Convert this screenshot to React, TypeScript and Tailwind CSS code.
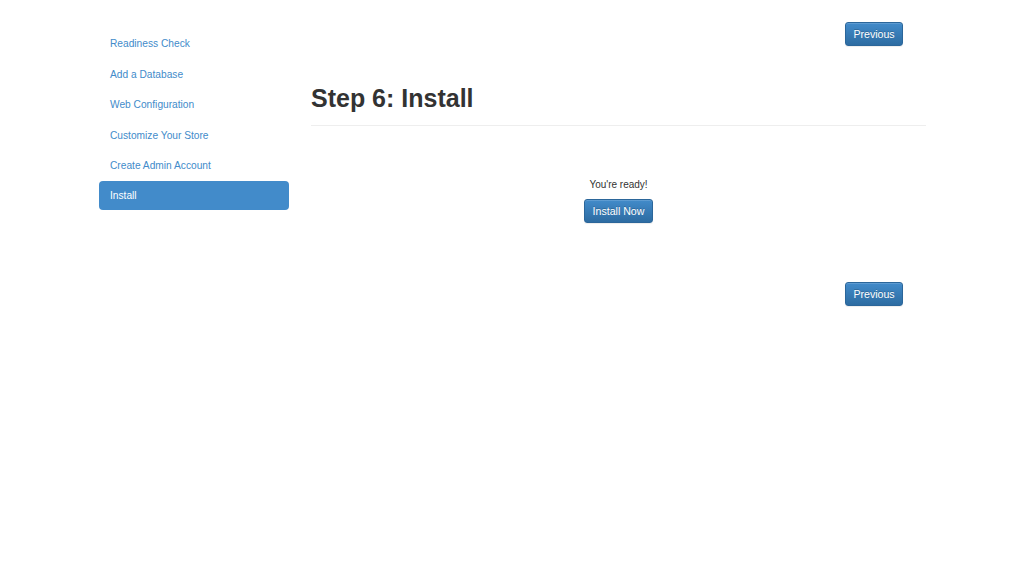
const steps = [
  "Readiness Check",
  "Add a Database",
  "Web Configuration",
  "Customize Your Store",
  "Create Admin Account",
  "Install",
]

function PrimaryButton({ children, width }: { children: React.ReactNode; width: string }) {
  return (
    <button
      className={`${width} h-[24px] rounded-[3px] border border-[#2b669a] bg-linear-to-b from-[#428bca] to-[#2d6ca2] text-white text-[10.6px] leading-none [text-shadow:0_-1px_0_rgba(0,0,0,0.2)] shadow-[inset_0_1px_0_rgba(255,255,255,0.15),0_1px_1px_rgba(0,0,0,0.075)]`}
    >
      {children}
    </button>
  )
}

export default function App() {
  return (
    <div className="min-h-[563px] w-full bg-white font-['Liberation_Sans',Arial,sans-serif] text-[#333]">
      <div className="flex items-start pl-[99px] pt-[22px]">
        <nav className="w-[190px] mt-[7.5px] flex flex-col gap-[1.4px]">
          {steps.map((step) => {
            const active = step === "Install"
            return (
              <a
                key={step}
                href="#"
                className={
                  active
                    ? "h-[29px] flex items-center pl-[11px] rounded-[4px] bg-[#428bca] text-white text-[10.2px]"
                    : "h-[29px] flex items-center pl-[11px] rounded-[4px] text-[#428bca] text-[10.2px]"
                }
              >
                {step}
              </a>
            )
          })}
        </nav>

        <main className="ml-[22px] w-[615px]">
          <div className="flex justify-end pr-[23px]">
            <PrimaryButton width="w-[58px]">Previous</PrimaryButton>
          </div>

          <h2 className="mt-[38.5px] pb-[12.5px] border-b border-[#eee] text-[25px] leading-[1.1] font-bold text-[#333]">
            Step 6: Install
          </h2>

          <div className="mt-[52px] flex flex-col items-center">
            <p className="text-[10px] leading-[14px]">You're ready!</p>
            <div className="mt-[6px]">
              <PrimaryButton width="w-[69px]">Install Now</PrimaryButton>
            </div>
          </div>

          <div className="mt-[59px] flex justify-end pr-[23px]">
            <PrimaryButton width="w-[58px]">Previous</PrimaryButton>
          </div>
        </main>
      </div>
    </div>
  )
}
